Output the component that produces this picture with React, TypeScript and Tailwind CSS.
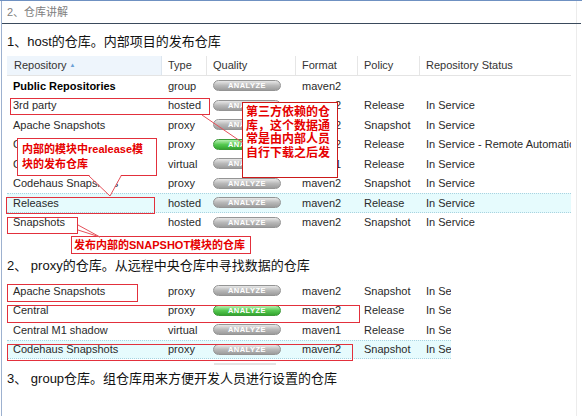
import React from "react";
import clsx from "clsx";

type Row = {
  name: string;
  type: string;
  fmt: string;
  policy: string;
  status: string;
  bold?: boolean;
  green?: boolean;
  hl?: boolean;
};

const hostRows: Row[] = [
  { name: "Public Repositories", bold: true, type: "group", fmt: "maven2", policy: "", status: "" },
  { name: "3rd party", type: "hosted", fmt: "maven2", policy: "Release", status: "In Service" },
  { name: "Apache Snapshots", type: "proxy", fmt: "maven2", policy: "Snapshot", status: "In Service" },
  { name: "Central", type: "proxy", green: true, fmt: "maven2", policy: "Release", status: "In Service - Remote Automatically Blocked" },
  { name: "Central M1 shadow", type: "virtual", fmt: "maven1", policy: "Release", status: "In Service" },
  { name: "Codehaus Snapshots", type: "proxy", fmt: "maven2", policy: "Snapshot", status: "In Service" },
  { name: "Releases", type: "hosted", fmt: "maven2", policy: "Release", status: "In Service", hl: true },
  { name: "Snapshots", type: "hosted", fmt: "maven2", policy: "Snapshot", status: "In Service" },
];

const proxyRows: Row[] = [
  { name: "Apache Snapshots", type: "proxy", fmt: "maven2", policy: "Snapshot", status: "In Service" },
  { name: "Central", type: "proxy", green: true, fmt: "maven2", policy: "Release", status: "In Service" },
  { name: "Central M1 shadow", type: "virtual", fmt: "maven1", policy: "Release", status: "In Service" },
  { name: "Codehaus Snapshots", type: "proxy", fmt: "maven2", policy: "Snapshot", status: "In Service", hl: true },
];

function Analyze({ green }: { green?: boolean }) {
  return (
    <span
      className={clsx(
        "inline-flex items-center justify-center w-[68px] h-[11px] rounded-full border text-[7.5px] leading-none font-bold tracking-[0.5px] text-white",
        green
          ? "bg-linear-to-b from-[#b4f0b0] via-[#56c951] to-[#33a52f] border-[#3c9a38]"
          : "bg-linear-to-b from-[#e8e8e8] via-[#b9b9b9] to-[#9c9c9c] border-[#949494]"
      )}
    >
      ANALYZE
    </span>
  );
}

function TableRow({ row, statusW }: { row: Row; statusW: string }) {
  return (
    <div
      className={clsx(
        "flex h-[19.5px] items-center text-[11px] text-[#2a2a2a] whitespace-nowrap",
        row.hl && "bg-[#e6fbfd] border-y border-dotted border-[#a9d3e0]"
      )}
    >
      <div className={clsx("w-[155px] pl-[6px]", row.bold && "font-bold text-black")}>{row.name}</div>
      <div className="w-[45px] pl-[6px]">{row.type}</div>
      <div className="w-[89px] pl-[6px] flex items-center">
        <Analyze green={row.green} />
      </div>
      <div className="w-[62px] pl-[6px]">{row.fmt}</div>
      <div className="w-[62px] pl-[6px]">{row.policy}</div>
      <div className={clsx("pl-[6px] overflow-hidden", statusW)}>{row.status}</div>
    </div>
  );
}

export default function App() {
  return (
    <div
      className="relative w-[582px] h-[416px] bg-white overflow-hidden border-t border-[#6f91c2]"
      style={{ fontFamily: '"Liberation Sans", Arial, "Noto Sans CJK SC", sans-serif' }}
    >
      <div className="ml-[1px] h-full border-l border-[#9db1cf] border-r border-r-[#ececec] mr-[5px]">
        {/* title bar */}
        <div className="h-[23px] flex items-center pl-[5px] text-[11px] text-[#808080] border-b border-[#3a4a5c] -mr-[5px]">
          2、仓库讲解
        </div>

        {/* 1. host */}
        <div className="h-[32px] pt-[9px] pl-[5px] leading-[18px] text-[13px] text-[#111]">
          1、host的仓库。内部项目的发布仓库
        </div>

        <div className="ml-[5px] w-[564px]">
          <div className="flex h-[20px] items-center text-[11px] text-[#333] border-b border-[#e4e4e4]">
            <div className="w-[155px] h-full flex items-center pl-[7px] bg-[#eef5fc] border-r border-[#dde6ef]">
              Repository
              <span className="ml-[3px] text-[6px] text-[#6b9fd6]">▲</span>
            </div>
            <div className="w-[45px] h-full flex items-center pl-[6px] border-r border-[#e6e6e6]">Type</div>
            <div className="w-[89px] h-full flex items-center pl-[6px] border-r border-[#e6e6e6]">Quality</div>
            <div className="w-[62px] h-full flex items-center pl-[6px] border-r border-[#e6e6e6]">Format</div>
            <div className="w-[62px] h-full flex items-center pl-[6px] border-r border-[#e6e6e6]">Policy</div>
            <div className="w-[151px] h-full flex items-center pl-[6px]">Repository Status</div>
          </div>
          {hostRows.map((r) => (
            <TableRow key={r.name} row={r} statusW="w-[151px]" />
          ))}
        </div>

        {/* 2. proxy */}
        <div className="h-[49px] pt-[25px] pl-[5px] leading-[18px] text-[13px] text-[#111]">
          2、 proxy的仓库。从远程中央仓库中寻找数据的仓库
        </div>

        <div className="ml-[5px] w-[444px]">
          {proxyRows.map((r) => (
            <TableRow key={r.name} row={r} statusW="w-[31px]" />
          ))}
        </div>

        {/* 3. group */}
        <div className="pt-[11px] pl-[5px] leading-[18px] text-[13px] text-[#111]">
          3、 group仓库。组仓库用来方便开发人员进行设置的仓库
        </div>
      </div>

      {/* annotations */}
      <div className="absolute left-[10px] top-[97px] w-[200px] h-[17px] border border-[#e2303c]" />
      <div className="absolute left-[6px] top-[196px] w-[149px] h-[17px] border border-[#e2303c]" />
      <div className="absolute left-[7px] top-[216px] w-[71px] h-[17px] border border-[#e2303c]" />
      <div className="absolute left-[7px] top-[283px] w-[131px] h-[18px] border border-[#e2303c]" />
      <div className="absolute left-[7px] top-[304px] w-[353px] h-[18px] border border-[#e2303c]" />
      <div className="absolute left-[7px] top-[343px] w-[346px] h-[17px] border border-[#e2303c]" />

      <div className="absolute left-[242px] top-[101px] w-[96px] h-[76px] bg-white border border-[#cc1a1a] pl-[3px] pt-[3px] text-[12px] leading-[13.5px] font-bold text-[#e60000] whitespace-nowrap">
        <div>第三方依赖的仓</div>
        <div>库，这个数据通</div>
        <div>常是由内部人员</div>
        <div>自行下载之后发</div>
      </div>

      <div className="absolute left-[17px] top-[137px] w-[140px] h-[38px] bg-white border border-[#e2303c] pl-[4px] pt-[3px] text-[11px] leading-[15px] font-bold text-[#e60000] whitespace-nowrap">
        <div>内部的模块中realease模</div>
        <div>块的发布仓库</div>
      </div>

      <div className="absolute left-[71px] top-[235px] w-[180px] h-[18px] bg-white border border-[#e2303c] flex items-center pl-[2px] text-[11px] font-bold text-[#e60000] whitespace-nowrap">
        发布内部的SNAPSHOT模块的仓库
      </div>

      <svg className="absolute left-0 top-0 pointer-events-none" width="582" height="416">
        <line x1="202" y1="114" x2="243" y2="142" stroke="#e5505a" strokeWidth="1" />
        <polygon points="89,174 110,195 121,174" fill="white" />
        <polyline points="89,175 110,195 121,175" fill="none" stroke="#e5505a" strokeWidth="1" />
        <polyline points="78,224 100,236 78,229" fill="none" stroke="#e5505a" strokeWidth="1" />
        <line x1="214" y1="363" x2="276" y2="363" stroke="#c8c8c8" strokeWidth="1" />
      </svg>
    </div>
  );
}
